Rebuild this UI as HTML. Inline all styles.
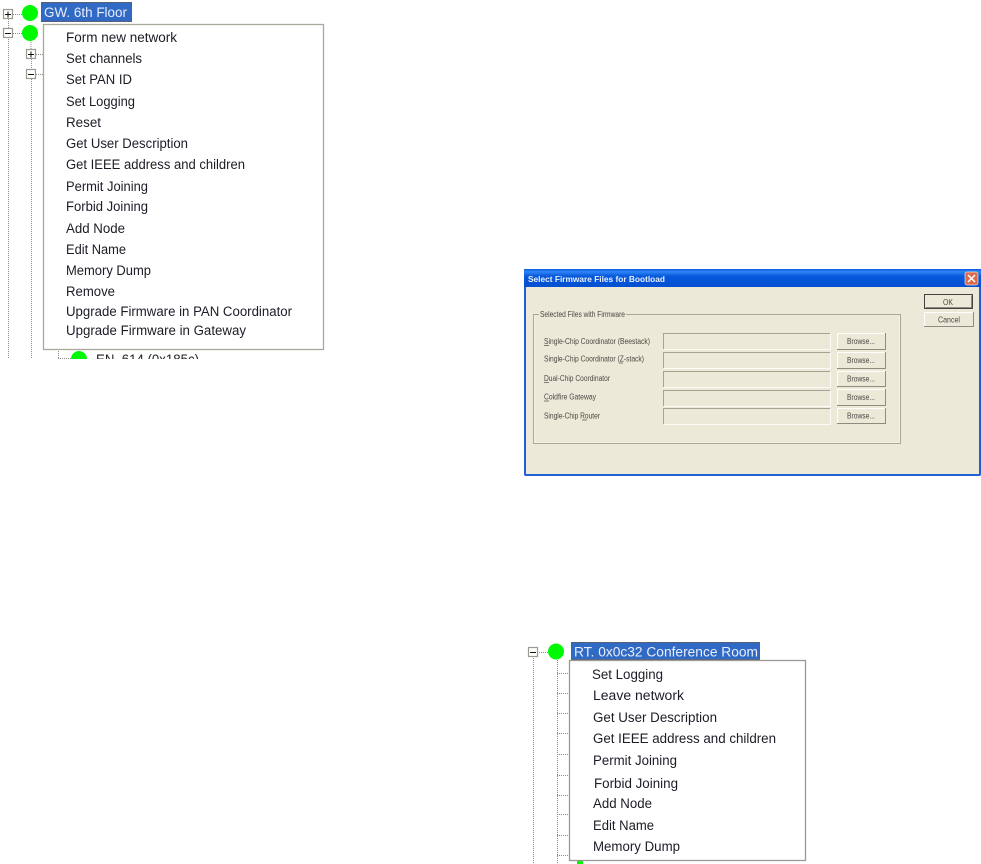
<!DOCTYPE html>
<html><head><meta charset="utf-8"><style>
html,body{margin:0;padding:0;background:#fff;width:981px;height:864px;overflow:hidden}
svg{display:block;position:absolute;left:0;top:0}
text{font-family:"Liberation Sans",sans-serif}
.m text{font-size:13.5px;fill:#1c1c28;filter:url(#b)}
.s{font-size:8px;fill:#4a4a44}
.d{stroke:#8c8c8c;stroke-width:1;stroke-dasharray:1 1;fill:none}
</style></head><body>
<svg width="981" height="864" viewBox="0 0 981 864" xmlns="http://www.w3.org/2000/svg">
<defs>
<filter id="b" x="-5%" y="-30%" width="110%" height="160%"><feGaussianBlur stdDeviation="0.3"/></filter>
<filter id="c" x="-5%" y="-30%" width="110%" height="160%"><feGaussianBlur stdDeviation="0.35"/></filter>
<linearGradient id="t" x1="0" y1="0" x2="0" y2="1"><stop offset="0" stop-color="#0a5ae0"/><stop offset=".15" stop-color="#2f86f5"/><stop offset=".4" stop-color="#0758dc"/><stop offset="1" stop-color="#0350d0"/></linearGradient>
</defs>

<!-- top-left tree -->
<path class="d" d="M8.5 19V358M31.5 59V69M31.5 79V358M13 14.5H22M13 33.5H22M36 54.5H43M36 74.5H43M31 38V49M58.5 345V358M58 358.5H71"/>
<g fill="#fff" stroke="#9a9a90" stroke-width="1.2"><rect x="3.5" y="9.5" width="9" height="9"/><rect x="3.5" y="28.5" width="9" height="9"/><rect x="26.5" y="49.5" width="9" height="9"/><rect x="26.5" y="69.5" width="9" height="9"/></g>
<path stroke="#111" d="M5 14.5H11M8 11.5V17.5M5 33.5H11M28 54.5H34M31 51.5V57.5M28 74.5H34" fill="none"/>
<circle cx="30" cy="13" r="8" fill="#00f900"/><circle cx="30" cy="33" r="8" fill="#00f900"/>
<rect x="41" y="2" width="91" height="20" fill="#316ac5"/>
<rect x="41.5" y="2.5" width="90" height="19" fill="none" stroke="#7a5a20" stroke-dasharray="1 1"/>
<text x="44" y="17" font-size="13.5" fill="#e8eefa" textLength="83" lengthAdjust="spacingAndGlyphs" filter="url(#b)">GW. 6th Floor</text>
<svg x="0" y="345" width="200" height="14" viewBox="0 345 200 14">
<circle cx="79" cy="359" r="8" fill="#00f900"/>
<text x="96" y="364" font-size="13.5" fill="#222" textLength="103" lengthAdjust="spacingAndGlyphs">EN. 614 (0x185c)</text>
</svg>
<rect x="43.5" y="24.5" width="280" height="325" fill="#fff" stroke="#aca899" stroke-width="1.3"/>
<g class="m">
<text x="66" y="42" textLength="111" lengthAdjust="spacingAndGlyphs">Form new network</text>
<text x="66" y="63" textLength="76" lengthAdjust="spacingAndGlyphs">Set channels</text>
<text x="66" y="84" textLength="66" lengthAdjust="spacingAndGlyphs">Set PAN ID</text>
<text x="66" y="106" textLength="69" lengthAdjust="spacingAndGlyphs">Set Logging</text>
<text x="66" y="127" textLength="35" lengthAdjust="spacingAndGlyphs">Reset</text>
<text x="66" y="148" textLength="122" lengthAdjust="spacingAndGlyphs">Get User Description</text>
<text x="66" y="169" textLength="179" lengthAdjust="spacingAndGlyphs">Get IEEE address and children</text>
<text x="66" y="191" textLength="82" lengthAdjust="spacingAndGlyphs">Permit Joining</text>
<text x="66" y="211" textLength="82" lengthAdjust="spacingAndGlyphs">Forbid Joining</text>
<text x="66" y="233" textLength="59" lengthAdjust="spacingAndGlyphs">Add Node</text>
<text x="66" y="254" textLength="60" lengthAdjust="spacingAndGlyphs">Edit Name</text>
<text x="66" y="275" textLength="85" lengthAdjust="spacingAndGlyphs">Memory Dump</text>
<text x="66" y="296" textLength="49" lengthAdjust="spacingAndGlyphs">Remove</text>
<text x="66" y="316" textLength="226" lengthAdjust="spacingAndGlyphs">Upgrade Firmware in PAN Coordinator</text>
<text x="66" y="335" textLength="180" lengthAdjust="spacingAndGlyphs">Upgrade Firmware in Gateway</text>
</g>

<!-- dialog -->
<rect x="524" y="269" width="457" height="207" rx="2" fill="#1f5fd8"/>
<rect x="524" y="269" width="457" height="18" fill="url(#t)"/>
<rect x="526" y="287" width="453" height="187" fill="#ece9d8"/>
<text x="528" y="282" font-size="8" font-weight="bold" fill="#e8f0ff" textLength="137" lengthAdjust="spacingAndGlyphs" filter="url(#c)">Select Firmware Files for Bootload</text>
<rect x="965" y="272" width="13" height="13" rx="2" fill="#dd6a4c" stroke="#e8e0d8" stroke-width=".7"/>
<path d="M968 275L975 282M975 275L968 282" stroke="#fff" stroke-width="1.5"/>

<path d="M539 314.5H533.500V443.5H900.5V314.5H626" fill="none" stroke="#aca899"/>
<path d="M534.5 316V442.5H899.5V316" fill="none" stroke="#fbfaf5" stroke-width=".6"/>
<text x="540" y="317" class="s" textLength="85" lengthAdjust="spacingAndGlyphs" filter="url(#c)">Selected Files with Firmware</text>

<g filter="url(#c)">
<text x="544" y="344" class="s" textLength="106" lengthAdjust="spacingAndGlyphs">Single-Chip Coordinator (Beestack)</text>
<text x="544" y="361.5" class="s" textLength="100" lengthAdjust="spacingAndGlyphs">Single-Chip Coordinator (Z-stack)</text>
<text x="544" y="381" class="s" textLength="66" lengthAdjust="spacingAndGlyphs">Dual-Chip Coordinator</text>
<text x="544" y="399.5" class="s" textLength="52" lengthAdjust="spacingAndGlyphs">Coldfire Gateway</text>
<text x="544" y="418.5" class="s" textLength="56" lengthAdjust="spacingAndGlyphs">Single-Chip Router</text>
</g>
<path d="M544 345.5H549M544 382.5H549M544 401H549M582 420H587M619 363H623" stroke="#555" stroke-width=".7"/>

<g fill="none" stroke="#a5a291">
<path d="M663.5 349V333.5H830"/><path d="M663.5 368V352.5H830"/><path d="M663.5 387V371.5H830"/><path d="M663.5 406V390.5H830"/><path d="M663.5 424V408.5H830"/>
</g>
<g fill="none" stroke="#fbfaf5"><path d="M664 349.5H830.5V334"/><path d="M664 368.5H830.5V353"/><path d="M664 387.5H830.5V372"/><path d="M664 406.5H830.5V391"/><path d="M664 424.5H830.5V409"/></g>

<g fill="none" stroke-width="1">
<path d="M837.5 349V333.5H885" stroke="#fff"/><path d="M837 349.5H885.5V333" stroke="#8f8c7f"/>
<path d="M837.5 368V352.5H885" stroke="#fff"/><path d="M837 368.5H885.5V352" stroke="#8f8c7f"/>
<path d="M837.5 386V371.5H885" stroke="#fff"/><path d="M837 386.5H885.5V371" stroke="#8f8c7f"/>
<path d="M837.5 405V389.5H885" stroke="#fff"/><path d="M837 405.5H885.5V389" stroke="#8f8c7f"/>
<path d="M837.5 423V408.5H885" stroke="#fff"/><path d="M837 423.5H885.5V408" stroke="#8f8c7f"/>
</g>
<g filter="url(#c)">
<text x="847" y="344" class="s" textLength="28" lengthAdjust="spacingAndGlyphs">Browse...</text>
<text x="847" y="363" class="s" textLength="28" lengthAdjust="spacingAndGlyphs">Browse...</text>
<text x="847" y="381.5" class="s" textLength="28" lengthAdjust="spacingAndGlyphs">Browse...</text>
<text x="847" y="400" class="s" textLength="28" lengthAdjust="spacingAndGlyphs">Browse...</text>
<text x="847" y="418.5" class="s" textLength="28" lengthAdjust="spacingAndGlyphs">Browse...</text>
</g>

<rect x="924.5" y="294.5" width="48" height="14" fill="#ece9d8" stroke="#444"/>
<path d="M971.5 295.5V307.5H925.5" stroke="#8f8c7f" fill="none"/>
<text x="943" y="305" class="s" textLength="10" lengthAdjust="spacingAndGlyphs" filter="url(#c)">OK</text>
<path d="M924.5 326V312.5H973" stroke="#fff" fill="none"/><path d="M924 326.5H973.5V312" stroke="#8f8c7f" fill="none"/>
<text x="938" y="322.5" class="s" textLength="22" lengthAdjust="spacingAndGlyphs" filter="url(#c)">Cancel</text>

<!-- bottom-right tree -->
<path class="d" d="M533.5 658V864M557.5 660V864M539 652.5H548M557 673.5H569M557 693.5H569M557 713.5H569M557 733.5H569M557 754.5H569M557 775.5H569M557 795.5H569M557 814.5H569M557 835.500H569M557 855.5H569"/>
<rect x="528.5" y="647.5" width="9" height="9" fill="#fff" stroke="#9a9a90" stroke-width="1.2"/>
<path d="M530 652.5H536" stroke="#111"/>
<circle cx="556" cy="651.5" r="8" fill="#00f900"/>
<rect x="571" y="642" width="189" height="18" fill="#316ac5"/>
<rect x="571.5" y="642.5" width="188" height="17" fill="none" stroke="#7a5a20" stroke-dasharray="1 1"/>
<text x="574" y="656.5" font-size="13.5" fill="#e8eefa" textLength="184" lengthAdjust="spacingAndGlyphs" filter="url(#b)">RT. 0x0c32 Conference Room</text>
<rect x="577" y="860" width="6" height="4" fill="#00f900"/>
<rect x="569.5" y="660.5" width="236" height="200" fill="#fff" stroke="#999" stroke-width="1.3"/>
<g class="m">
<text x="592" y="679" textLength="71" lengthAdjust="spacingAndGlyphs">Set Logging</text>
<text x="593" y="700" textLength="91" lengthAdjust="spacingAndGlyphs">Leave network</text>
<text x="593" y="722" textLength="124" lengthAdjust="spacingAndGlyphs">Get User Description</text>
<text x="593" y="743" textLength="183" lengthAdjust="spacingAndGlyphs">Get IEEE address and children</text>
<text x="593" y="765" textLength="84" lengthAdjust="spacingAndGlyphs">Permit Joining</text>
<text x="594" y="788" textLength="84" lengthAdjust="spacingAndGlyphs">Forbid Joining</text>
<text x="593" y="808" textLength="59" lengthAdjust="spacingAndGlyphs">Add Node</text>
<text x="593" y="830" textLength="61" lengthAdjust="spacingAndGlyphs">Edit Name</text>
<text x="593" y="851" textLength="87" lengthAdjust="spacingAndGlyphs">Memory Dump</text>
</g>
</svg>
</body></html>
